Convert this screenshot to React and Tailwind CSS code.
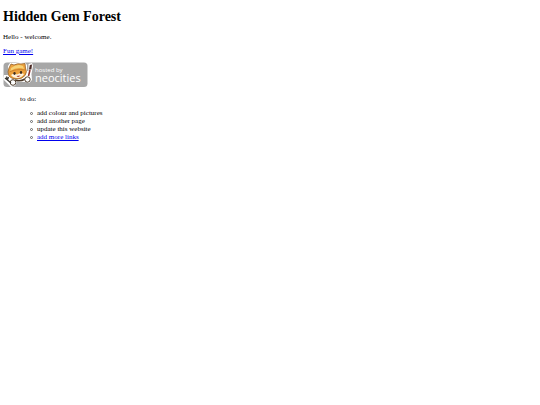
import React from "react";

function NeocitiesBadge() {
  return (
    <svg viewBox="0 0 85 26" className="block h-[26px] w-[85px]" role="img" aria-label="Hosted by Neocities">
      <rect x="0.5" y="0.5" width="84" height="24.5" rx="3.5" fill="#a7a7a7" />
      {/* white outline around the cat */}
      <path d="M5 4 L7 1 L12 1 L17 0 L22 0.5 L24 3 L24 9 L25.5 9 L25.5 2 L29 1 L30 4 L28.5 12 L29 18 L26 21 L22 20 L14 20 L12 24 L8 25 L5 22 L0 17 L1 13 L5 13 Z" fill="#fff" />
      {/* head and ears */}
      <path d="M6 6 L8 2 L11 3 Q15 1 18 2 L22 1.5 L22.5 6 Q24.5 10 22 13.5 Q19 17 14 17 Q8 17 6 14 Q4 10 6 6 Z" fill="#eda13c" stroke="#94622c" strokeWidth="0.8" />
      <path d="M8 6 Q14 1.5 20 4 L21 7 Q14 4.5 7.5 9 Z" fill="#f6d276" />
      <path d="M6.5 10 Q13 6.5 22 8" stroke="#c47a28" strokeWidth="0.8" fill="none" />
      <path d="M8 13 Q11 11 14 12.5 Q18 10.5 21 12 Q19 16 14 16 Q10 16 8 13 Z" fill="#fff3dc" />
      <ellipse cx="11.5" cy="11.5" rx="1.2" ry="1.4" fill="#3f2e20" />
      <ellipse cx="18" cy="10.5" rx="1.2" ry="1.4" fill="#3f2e20" />
      <path d="M13.5 14 Q15.5 16 17.5 13.5 Z" fill="#a5392d" />
      {/* body and paws */}
      <path d="M12 18 Q17 20 22 17" stroke="#4b3826" strokeWidth="1.5" fill="none" />
      <circle cx="10" cy="20.5" r="2.8" fill="#fff" stroke="#4f3e2d" strokeWidth="1" />
      <circle cx="24.5" cy="17.5" r="2.7" fill="#fff" stroke="#4f3e2d" strokeWidth="1" />
      {/* fork and brush */}
      <path d="M4.5 18 L8 21 M2 16 L4.5 18 L3.5 14.5 M2 16 L4.5 18 L5.5 15" stroke="#393530" strokeWidth="1.2" fill="none" />
      <path d="M25.5 14 L27 8" stroke="#8b3028" strokeWidth="1.5" />
      <path d="M26 7.5 L26.8 3 L29 2.5 L28.4 7.5 Z" fill="#4b2a25" />
      <text x="32" y="9.5" fill="#fff" fontFamily="'Open Sans', sans-serif" fontSize="6">hosted by</text>
      <text x="32" y="20" fill="#fff" fontFamily="'Open Sans', sans-serif" fontSize="11" className="[font-variant-ligatures:none]">neocities</text>
    </svg>
  );
}

const itemClass =
  "flex items-center before:mr-1 before:size-[3px] before:rounded-full before:border before:border-[#666666] before:content-['']";

export default function App() {
  return (
    <main className="px-[3px] pt-[9px] font-['Liberation_Serif',serif] text-[7px] leading-[8px] text-black">
      <h1 className="text-[14px] leading-4 font-bold">Hidden Gem Forest</h1>
      <p className="mt-2">Hello - welcome.</p>
      <p className="mt-1.5">
        <a href="#game" className="text-[#0000ee] underline">Fun game!</a>
      </p>
      <a href="#neocities" className="mt-[7px] block w-fit">
        <NeocitiesBadge />
      </a>
      <section className="mt-[7px] pl-[17px]">
        <p>to do:</p>
        <ul className="mt-1.5 pl-2.5">
          <li className={itemClass}>add colour and pictures</li>
          <li className={itemClass}>add another page</li>
          <li className={itemClass}>update this website</li>
          <li className={itemClass}>
            <a href="#links" className="text-[#0000ee] underline">add more links</a>
          </li>
        </ul>
      </section>
    </main>
  );
}
